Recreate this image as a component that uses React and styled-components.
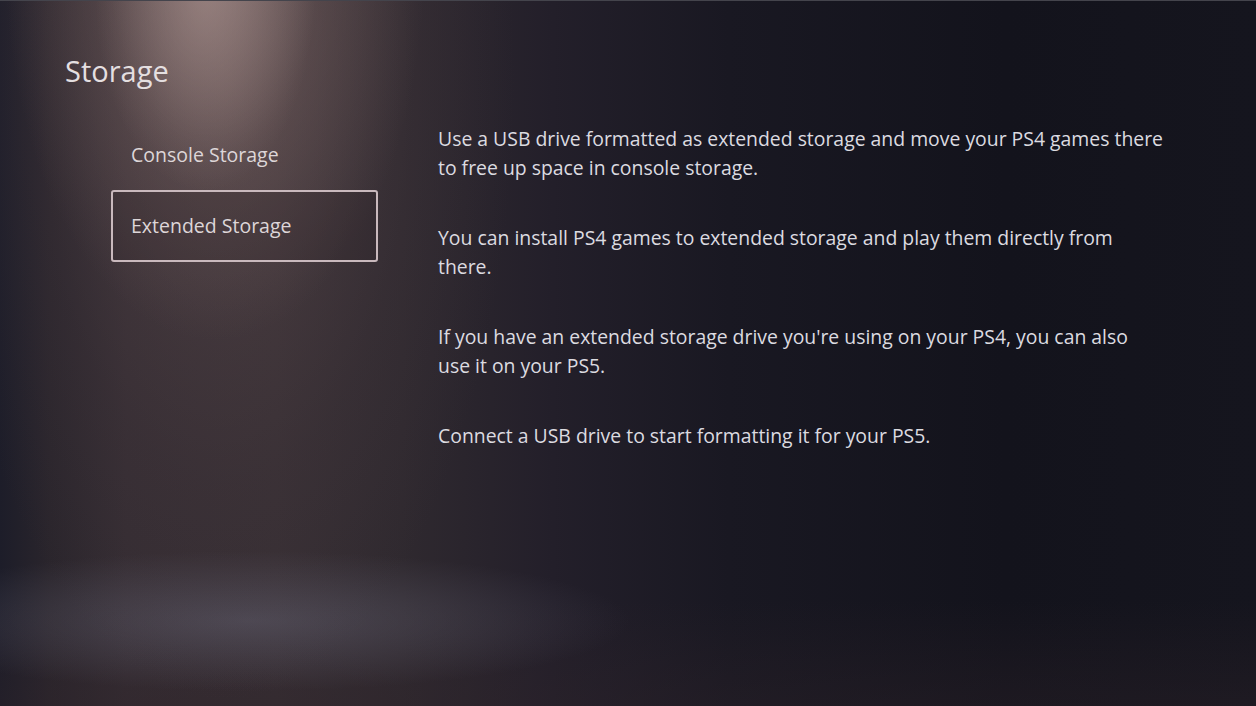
import React, { useState } from 'react';
import styled, { createGlobalStyle } from 'styled-components';

const GlobalStyle = createGlobalStyle`
  html, body {
    margin: 0;
    padding: 0;
    background: #14141d;
  }
  * {
    box-sizing: border-box;
  }
`;

const menu = ['Console Storage', 'Extended Storage'];

// each paragraph broken where the console UI breaks it
const paragraphs = [
  ['Use a USB drive formatted as extended storage and move your PS4 games there', 'to free up space in console storage.'],
  ['You can install PS4 games to extended storage and play them directly from', 'there.'],
  ["If you have an extended storage drive you're using on your PS4, you can also", 'use it on your PS5.'],
  ['Connect a USB drive to start formatting it for your PS5.'],
];

function App() {
  const [selected, setSelected] = useState(1);

  return (
    <>
      <GlobalStyle />
      <Screen>
        <Title>Storage</Title>
        <Body>
          <Menu>
            {menu.map((label, i) => (
              <MenuItem key={label} $active={selected === i} onClick={() => setSelected(i)}>
                {label}
              </MenuItem>
            ))}
          </Menu>
          <Info>
            {paragraphs.map((lines) => (
              <Paragraph key={lines[0]}>
                {lines.map((line) => (
                  <Line key={line}>{line}</Line>
                ))}
              </Paragraph>
            ))}
          </Info>
        </Body>
      </Screen>
    </>
  );
}

const Screen = styled.div`
  width: 1256px;
  height: 706px;
  overflow: hidden;
  font-family: 'Open Sans', 'Noto Sans', sans-serif;
  color: #dcdbe0;
  border-top: 1px solid #44444c;
  background:
    radial-gradient(ellipse 110px 200px at 205px -10px, rgba(185, 160, 155, 0.45), rgba(185, 160, 155, 0) 100%),
    radial-gradient(ellipse 210px 380px at 215px -40px, rgba(160, 135, 132, 0.6), rgba(140, 115, 112, 0.28) 50%, rgba(120, 100, 100, 0) 100%),
    radial-gradient(ellipse 380px 70px at 250px 620px, rgba(100, 98, 114, 0.5), rgba(80, 76, 92, 0) 100%),
    radial-gradient(ellipse 290px 620px at 225px 80px, rgba(98, 80, 82, 0.5), rgba(80, 64, 70, 0.18) 65%, rgba(60, 50, 60, 0) 100%),
    linear-gradient(180deg, rgba(0, 0, 0, 0) 85%, rgba(48, 36, 42, 0.35) 100%),
    linear-gradient(90deg, #1d1d29 0%, #2a252c 4%, #342c32 10%, #362e33 22%, #2f292f 32%, #231f2a 44%, #191822 58%, #13131c 80%, #15151e 100%);
`;

const Title = styled.h1`
  margin: 0;
  padding: 51px 0 0 65px;
  font-size: 29px;
  font-weight: 400;
  line-height: 38px;
  color: #e4dfe0;
`;

const Body = styled.div`
  display: flex;
  padding: 31px 0 0 111px;
`;

const Menu = styled.div`
  display: flex;
  flex-direction: column;
  width: 267px;
  flex-shrink: 0;
`;

const MenuItem = styled.div`
  height: 72px;
  display: flex;
  align-items: center;
  padding: 0 0 2px 18px;
  font-size: 19.5px;
  color: #ddd6d8;
  border: 2px solid ${(p) => (p.$active ? '#c9b9bd' : 'transparent')};
  border-radius: 3px;
  background: ${(p) => (p.$active ? 'rgba(40, 30, 34, 0.2)' : 'transparent')};
  cursor: pointer;
  &:first-child {
    height: 69px;
  }
`;

const Info = styled.div`
  margin-left: 60px;
  padding-top: 3px;
  display: flex;
  flex-direction: column;
  gap: 41px;
`;

const Paragraph = styled.p`
  margin: 0;
  font-size: 19.4px;
  line-height: 29px;
`;

const Line = styled.span`
  display: block;
  white-space: nowrap;
`;

export default App;
